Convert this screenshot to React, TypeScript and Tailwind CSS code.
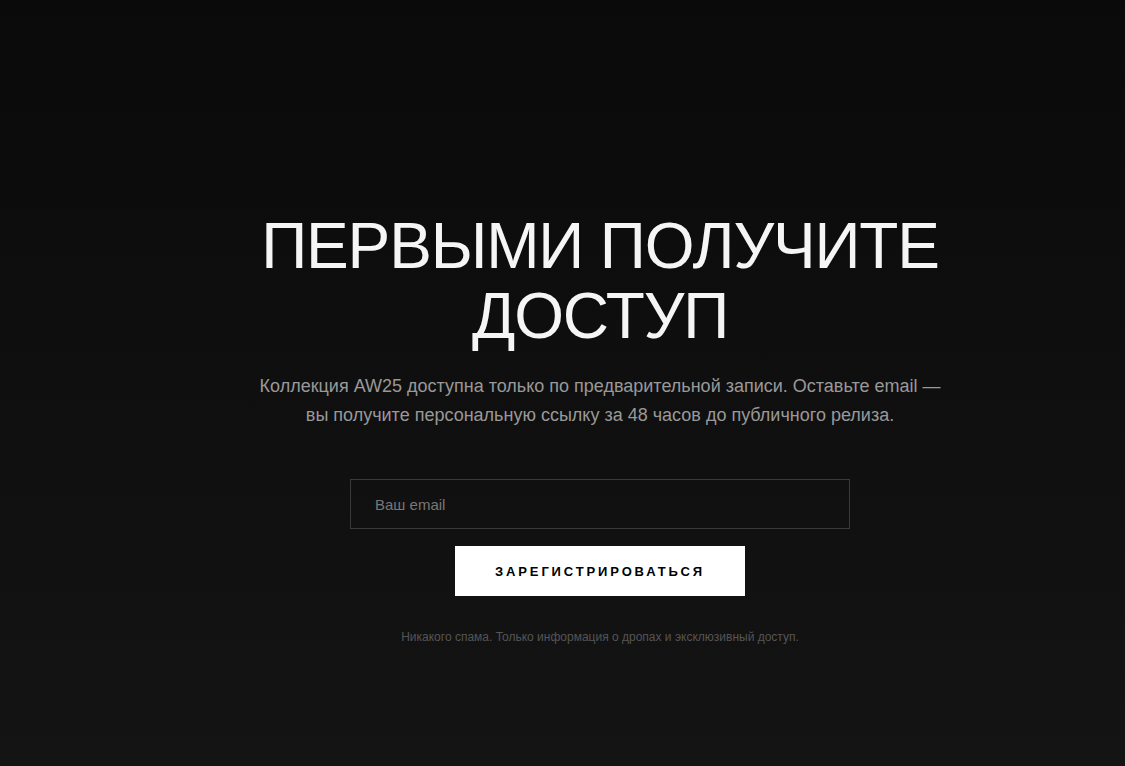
import React from 'react';

const App: React.FC = () => {
  return (
    <div className="min-h-screen bg-gradient-to-b from-[#0a0a0a] to-[#141414] font-['Liberation_Sans',Arial,sans-serif]">
      {/* Pre-registration */}
      <section className="pl-[75px] pt-[211px] pb-20">
        <div className="mx-auto flex max-w-[720px] flex-col items-center text-center">
          <h1 className="mb-5 text-[64px] leading-[1.1] font-normal tracking-[-0.018em] text-[#f5f5f5] uppercase">
            Первыми получите доступ
          </h1>
          <p className="mb-[50px] max-w-[700px] text-[18px] leading-[1.6] text-[#999999]">
            Коллекция AW25 доступна только по предварительной записи. Оставьте email — вы получите персональную ссылку за 48 часов до публичного релиза.
          </p>
          <form className="flex w-[500px] flex-col items-center gap-[17px]" onSubmit={(e) => e.preventDefault()}>
            <input
              type="email"
              placeholder="Ваш email"
              className="h-[50px] w-full border border-[#3a3a3a] bg-transparent px-6 text-[15px] text-white placeholder:text-[#777777] outline-none"
            />
            <button
              type="submit"
              className="h-[50px] w-[290px] bg-white text-[13px] font-bold tracking-[0.22em] text-black uppercase"
            >
              Зарегистрироваться
            </button>
          </form>
          <p className="mt-[33px] text-[12px] leading-4 text-[#555555]">
            Никакого спама. Только информация о дропах и эксклюзивный доступ.
          </p>
        </div>
      </section>
    </div>
  );
};

export default App;
